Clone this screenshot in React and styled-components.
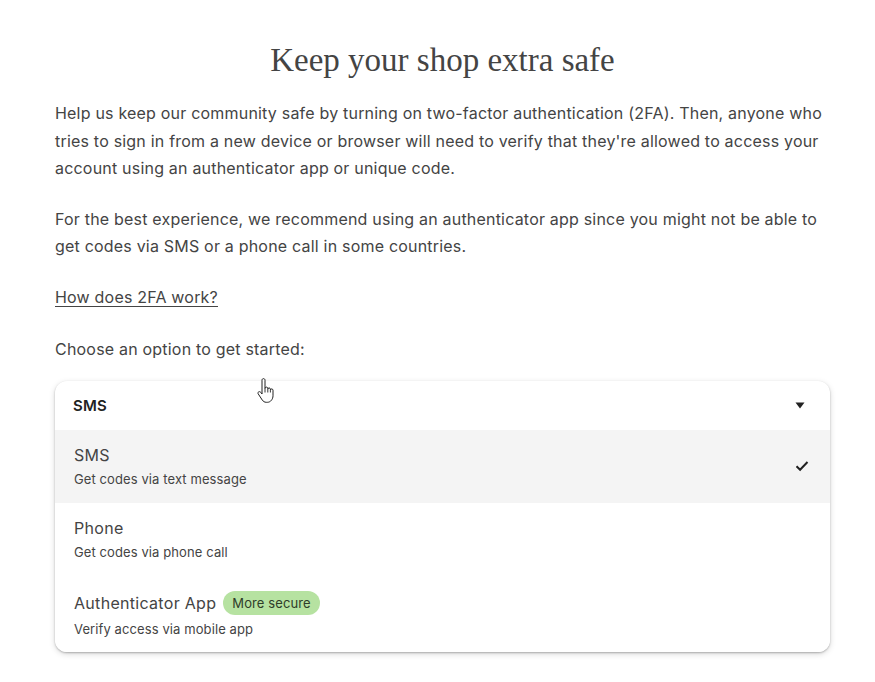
import React from "react";
import styled, { createGlobalStyle } from "styled-components";

const Global = createGlobalStyle`
  html, body { margin: 0; padding: 0; background: #fff; }
  body { font-family: "Inter", "Noto Sans", sans-serif; color: #444; }
  * { box-sizing: border-box; }
`;

const Page = styled.main`
  width: 875px;
  padding: 38px 45px 30px 55px;
  position: relative;
`;

const Title = styled.h1`
  margin: 0 0 18px;
  text-align: center;
  font-family: "Liberation Serif", "DejaVu Serif", serif;
  font-weight: 400;
  font-size: 33px;
  line-height: 44px;
  color: #444;
`;

const Para = styled.p`
  margin: 0 0 ${p => p.$mb || 23}px;
  font-size: 16px;
  line-height: 27.5px;
  letter-spacing: 0.2px;
  color: #444;
`;

const Link = styled.a`
  color: #444;
  text-decoration: underline;
  text-underline-offset: 3px;
  text-decoration-thickness: 1px;
`;

const Card = styled.div`
  margin-top: -6px;
  width: 775px;
  border-radius: 12px;
  background: #fff;
  box-shadow: 0 1px 2px rgba(0,0,0,0.25), 0 2px 6px rgba(0,0,0,0.15);
  overflow: hidden;
`;

const Header = styled.div`
  height: 49px;
  display: flex;
  align-items: center;
  justify-content: space-between;
  padding: 0 25px 0 18px;
  font-size: 15px;
  font-weight: 600;
  color: #222;
  letter-spacing: 0.2px;
`;

const Option = styled.div`
  height: ${p => p.$h || 74}px;
  display: flex;
  align-items: center;
  justify-content: space-between;
  padding: 0 21px 0 19px;
  background: ${p => (p.$selected ? "#f4f4f4" : "#fff")};
`;

const OptText = styled.div`
  display: flex;
  flex-direction: column;
  gap: 5px;
`;

const OptTitle = styled.div`
  display: flex;
  align-items: center;
  gap: 7px;
  font-size: 16px;
  line-height: 20px;
  letter-spacing: 0.3px;
  color: #444;
`;

const OptSub = styled.div`
  font-size: 13px;
  line-height: 18px;
  letter-spacing: 0.1px;
  color: #444;
`;

const Badge = styled.span`
  display: inline-flex;
  align-items: center;
  height: 24px;
  padding: 0 9px;
  border-radius: 12px;
  background: #b6e2a1;
  font-size: 13px;
  letter-spacing: 0.1px;
  color: #2f3d29;
`;

const Cursor = styled.svg`
  position: absolute;
  left: 257px;
  top: 378px;
`;

const Caret = () => (
  <svg width="10" height="7" viewBox="0 0 10 7"><path d="M0.5 0.5h9L5 6.5z" fill="#222" /></svg>
);

const Check = () => (
  <svg width="14" height="12" viewBox="0 0 14 12"><path d="M1.5 6.2l3.6 3.6L12.5 2" fill="none" stroke="#222" strokeWidth="2" /></svg>
);

export default function App() {
  return (
    <>
      <Global />
      <Page>
        <Title>Keep your shop extra safe</Title>
        <Para>
          Help us keep our community safe by turning on two-factor authentication (2FA). Then, anyone who tries to sign in from a new device or browser will need to verify that they're allowed to access your account using an authenticator app or unique code.
        </Para>
        <Para>
          For the best experience, we recommend using an authenticator app since you might not be able to get codes via SMS or a phone call in some countries.
        </Para>
        <Para $mb={25}><Link href="#">How does 2FA work?</Link></Para>
        <Para>Choose an option to get started:</Para>
        <Card>
          <Header>
            <span>SMS</span>
            <Caret />
          </Header>
          <Option $selected $h={73}>
            <OptText>
              <OptTitle>SMS</OptTitle>
              <OptSub>Get codes via text message</OptSub>
            </OptText>
            <Check />
          </Option>
          <Option>
            <OptText>
              <OptTitle>Phone</OptTitle>
              <OptSub>Get codes via phone call</OptSub>
            </OptText>
          </Option>
          <Option $h={75}>
            <OptText>
              <OptTitle>Authenticator App <Badge>More secure</Badge></OptTitle>
              <OptSub>Verify access via mobile app</OptSub>
            </OptText>
          </Option>
        </Card>
        <Cursor width="18" height="26" viewBox="0 0 18 26">
          <path d="M5 2.2c0-1 .7-1.6 1.5-1.6S8 1.2 8 2.2v8.3c0-.9.6-1.4 1.4-1.4s1.4.5 1.4 1.4v.8c0-.9.6-1.4 1.3-1.4s1.3.5 1.3 1.4v.9c0-.8.6-1.3 1.3-1.3s1.3.5 1.3 1.3v5.6c0 3.3-2.4 6.5-5.6 6.5H9.3c-1.8 0-3-.9-4-2.2L1.3 16c-.6-.8-.4-1.7.3-2.1.7-.5 1.6-.2 2.2.5L5 16z" fill="#fff" stroke="#222" strokeWidth="1" strokeLinejoin="round" />
          <path d="M8 10.5v4M10.8 11.3v3.2M13.4 12.2v2.3" stroke="#222" strokeWidth="0.9" />
        </Cursor>
      </Page>
    </>
  );
}
